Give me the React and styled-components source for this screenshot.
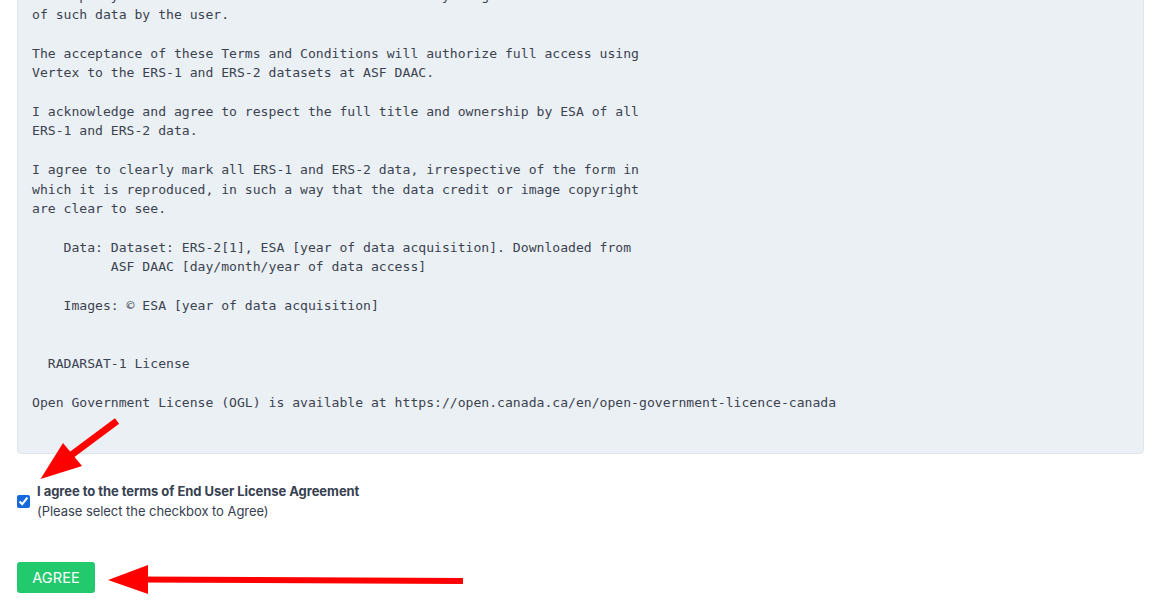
import React from "react";
import styled, { createGlobalStyle } from "styled-components";

const Global = createGlobalStyle`
  html, body { margin: 0; padding: 0; background: #ffffff; }
  body { overflow: hidden; width: 1160px; height: 609px; }
`;

const Page = styled.div`
  position: relative;
  width: 1160px;
  height: 609px;
  overflow: hidden;
  box-sizing: border-box;
  padding: 0 16px 0 17px;
  font-family: Inter, "Liberation Sans", sans-serif;
`;

const TermsPanel = styled.pre`
  margin: -50.6px 0 0 0;
  box-sizing: border-box;
  width: 100%;
  padding: 16px 15px 41px 14px;
  background: #ebf0f5;
  border: 1px solid #dfe5ec;
  border-radius: 4px;
  font-family: "DejaVu Sans Mono", "Liberation Mono", monospace;
  font-size: 13.1px;
  line-height: 19.38px;
  color: #3b4350;
  white-space: pre;
  overflow: hidden;
`;

const AgreeRow = styled.label`
  display: flex;
  align-items: center;
  gap: 7px;
  margin-top: 27px;
  cursor: pointer;
`;

const Check = styled.input`
  margin: 0;
  width: 13px;
  height: 13px;
  accent-color: #1668dc;
  flex: none;
`;

const LabelText = styled.div`
  display: flex;
  flex-direction: column;
  font-size: 13px;
  line-height: 20px;
  color: #374151;
  letter-spacing: -0.05px;
`;

const LabelMain = styled.span`
  font-weight: 700;
`;

const LabelHint = styled.span`
  font-weight: 400;
`;

const AgreeButton = styled.button`
  margin-top: 41px;
  width: 78px;
  height: 31px;
  border: none;
  border-radius: 3px;
  background: #22c96d;
  color: #ffffff;
  font-family: Inter, "Liberation Sans", sans-serif;
  font-size: 14.5px;
  font-weight: 400;
  letter-spacing: 0.1px;
  cursor: pointer;
  display: block;
`;

const Annotations = styled.svg`
  position: absolute;
  left: 0;
  top: 0;
  width: 1160px;
  height: 609px;
  pointer-events: none;
`;

const terms = [
  "ESA shall not be liable for any claim, loss or damage suffered by the user or",
  "third party as a result of the unlicensed uses and by usage",
  "of such data by the user.",
  "",
  "The acceptance of these Terms and Conditions will authorize full access using",
  "Vertex to the ERS-1 and ERS-2 datasets at ASF DAAC.",
  "",
  "I acknowledge and agree to respect the full title and ownership by ESA of all",
  "ERS-1 and ERS-2 data.",
  "",
  "I agree to clearly mark all ERS-1 and ERS-2 data, irrespective of the form in",
  "which it is reproduced, in such a way that the data credit or image copyright",
  "are clear to see.",
  "",
  "    Data: Dataset: ERS-2[1], ESA [year of data acquisition]. Downloaded from",
  "          ASF DAAC [day/month/year of data access]",
  "",
  "    Images: \u00a9 ESA [year of data acquisition]",
  "",
  "",
  "  RADARSAT-1 License",
  "",
  "Open Government License (OGL) is available at https://open.canada.ca/en/open-government-licence-canada",
].join("\n");

export default function App() {
  const [checked, setChecked] = React.useState(true);
  return (
    <>
      <Global />
      <Page>
        <TermsPanel>{terms}</TermsPanel>
        <AgreeRow>
          <Check
            type="checkbox"
            checked={checked}
            onChange={(e) => setChecked(e.target.checked)}
          />
          <LabelText>
            <LabelMain>I agree to the terms of End User License Agreement</LabelMain>
            <LabelHint>(Please select the checkbox to Agree)</LabelHint>
          </LabelText>
        </AgreeRow>
        <AgreeButton type="button">AGREE</AgreeButton>
        <Annotations viewBox="0 0 1160 609">
          <line x1="117" y1="421" x2="70" y2="456" stroke="#ff0000" strokeWidth="7" />
          <polygon points="40.5,479 63,443 82,466" fill="#ff0000" />
          <line x1="140" y1="579.5" x2="463" y2="581" stroke="#ff0000" strokeWidth="6" />
          <polygon points="108,580 148,565 148,594" fill="#ff0000" />
        </Annotations>
      </Page>
    </>
  );
}
